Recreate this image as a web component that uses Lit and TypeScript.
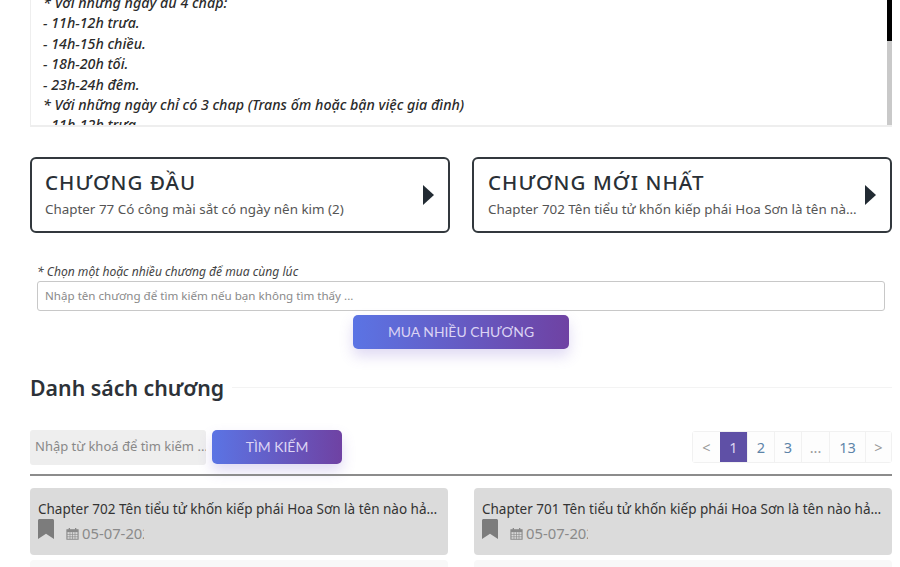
import { LitElement, html, css } from "lit";
import { customElement } from "lit/decorators.js";

const bookmark = html`<svg class="bm" viewBox="0 0 16 20" width="16" height="20"><path d="M0 1.5C0 .7.7 0 1.5 0h13c.8 0 1.5.7 1.5 1.5V20l-8-5.2L0 20z" fill="#7c7c7c"/></svg>`;
const calendar = html`<svg class="cal" viewBox="0 0 14 14" width="13" height="13"><path d="M1 3h12v10.2H1z" fill="none" stroke="#8a8a8a" stroke-width="1.2"/><path d="M1 3h12v2.6H1z" fill="#8a8a8a"/><path d="M3.6 1v2.6M10.4 1v2.6" stroke="#8a8a8a" stroke-width="1.4"/><path d="M4.3 5.5v7.5M7 5.5v7.5M9.7 5.5v7.5M1 8h12M1 10.5h12" stroke="#8a8a8a" stroke-width=".7"/></svg>`;
const arrow = html`<svg class="arrow" viewBox="0 0 11 20" width="11" height="20"><path d="M0 0l11 10L0 20z" fill="#222b33"/></svg>`;

@customElement("app-root")
export class AppRoot extends LitElement {
  static styles = css`
    :host { display: block; height: 567px; overflow: hidden; background: #fff; font-family: "Noto Sans", "Open Sans", sans-serif; color: #333; }
    .page { display: flex; flex-direction: column; padding: 0 8px 0 30px; }
    .notice { display: flex; height: 127px; border-left: 1px solid #eee; border-bottom: 2px solid #eee; overflow: hidden; box-sizing: border-box; }
    .notice-text { flex: 1; padding-left: 12px; margin-top: -7px; font-style: italic; font-weight: 500; font-size: 14.25px; line-height: 20.4px; color: #2b2b2b; }
    .track { width: 5px; background: #c9c9c9; align-self: stretch; }
    .thumb { height: 41px; background: #000; }
    .cards { display: grid; grid-template-columns: 420px 420px; gap: 22px; margin-top: 30px; }
    .card { box-sizing: border-box; height: 76px; border: 2px solid #32383d; border-radius: 6px; padding: 10px 14px 0 14px; display: flex; align-items: center; gap: 5px; }
    .card:first-child { padding-left: 13px; }
    .card-body { flex: 1; min-width: 0; align-self: flex-start; }
    .card-title { font-size: 20.5px; line-height: 26px; letter-spacing: 1.1px; font-weight: 500; color: #2a3036; white-space: nowrap; }
    .card-sub { margin-top: 5px; font-size: 13.4px; line-height: 18px; color: #555; white-space: nowrap; overflow: hidden; text-overflow: ellipsis; }
    .arrow { flex: none; margin-top: -10px; }
    .bulk { margin: 30px 7px 0 7px; display: flex; flex-direction: column; }
    .hint { font-size: 12.1px; line-height: 17px; font-style: italic; color: #444; }
    .bulk-input { box-sizing: border-box; height: 30px; margin-top: 1px; border: 1px solid #c8c8c8; border-radius: 3px; padding: 0 7px; font-size: 11.6px; line-height: 27px; color: #8a8a8a; }
    .btn { box-sizing: border-box; padding-bottom: 2px; display: flex; align-items: center; justify-content: center; color: #dcd4f4; border-radius: 5px; background: linear-gradient(90deg, #5b74e4, #6f42a3); box-shadow: 0 7px 14px rgba(110, 80, 200, .22); font-family: "Lato", sans-serif; }
    .btn-bulk { align-self: center; width: 216px; height: 34px; margin-top: 4px; font-size: 13.9px; }
    .heading { display: flex; align-items: center; gap: 8px; margin-top: 22px; height: 32px; }
    .heading h2 { margin: 0; font-size: 21.3px; font-weight: 600; color: #2d3238; white-space: nowrap; }
    .heading i { flex: 1; height: 1px; background: #f3f3f3; }
    .tools { display: flex; align-items: flex-start; margin-top: 27px; height: 35px; }
    .search { box-sizing: border-box; width: 176px; height: 35px; background: #eee; border-radius: 3px; padding: 0 5px; font-size: 13px; line-height: 33px; color: #888; white-space: nowrap; overflow: hidden; }
    .btn-search { width: 130px; height: 34px; margin-left: 6px; font-size: 13.9px; }
    .pager { display: flex; margin-left: auto; margin-top: 1px; height: 32px; border: 1px solid #f1f1f1; border-radius: 3px; box-sizing: border-box; }
    .pager span { display: flex; align-items: center; justify-content: center; height: 100%; font-size: 14.5px; color: #5d84a8; border-left: 1px solid #f1f1f1; box-sizing: border-box; background: #fdfdfd; }
    .pager span:first-child { border-left: 0; }
    .pager .muted { color: #999; }
    .pager .on { background: #5f50a6; color: #ddd8f0; border-left: 0; }
    .rule { height: 2px; background: #8c8c8c; margin-top: 9px; }
    .rows { display: grid; grid-template-columns: 418px 418px; gap: 5px 26px; margin-top: 12px; }
    .row { box-sizing: border-box; height: 67px; background: #dbdbdb; border-radius: 4px; padding: 11px 8px 0 8px; min-width: 0; }
    .row.blank { background: #f8f8f8; }
    .row-title { font-size: 13.5px; line-height: 20px; color: #333; white-space: nowrap; overflow: hidden; text-overflow: ellipsis; }
    .row-meta { display: flex; align-items: center; height: 24px; margin-top: 2px; }
    .bm { flex: none; margin-top: -8px; }
    .cal { flex: none; margin-left: 12px; }
    .date { width: 62px; margin-left: 3px; font-size: 14.8px; color: #8a8a8a; overflow: hidden; white-space: nowrap; }
  `;

  render() {
    const lines = ["* Với những ngày đủ 4 chap:", "- 11h-12h trưa.", "- 14h-15h chiều.", "- 18h-20h tối.", "- 23h-24h đêm.", "* Với những ngày chỉ có 3 chap (Trans ốm hoặc bận việc gia đình)", "- 11h-12h trưa."];
    const pages: [string, number, string][] = [["<", 27, "muted"], ["1", 27, "on"], ["2", 27, ""], ["3", 27, ""], ["...", 28, "muted"], ["13", 36, ""], [">", 26, "muted"]];
    const rows = ["Chapter 702 Tên tiểu tử khốn kiếp phái Hoa Sơn là tên nào hả vậy trời đất ơi", "Chapter 701 Tên tiểu tử khốn kiếp phái Hoa Sơn là tên nào hả vậy trời đất ơi"];
    return html`<div class="page">
      <div class="notice">
        <div class="notice-text">${lines.map((l) => html`<div>${l}</div>`)}</div>
        <div class="track"><div class="thumb"></div></div>
      </div>
      <div class="cards">
        <div class="card"><div class="card-body"><div class="card-title">CHƯƠNG ĐẦU</div><div class="card-sub">Chapter 77 Có công mài sắt có ngày nên kim (2)</div></div>${arrow}</div>
        <div class="card"><div class="card-body"><div class="card-title">CHƯƠNG MỚI NHẤT</div><div class="card-sub">Chapter 702 Tên tiểu tử khốn kiếp phái Hoa Sơn là tên nào hả vậy trời đất</div></div>${arrow}</div>
      </div>
      <div class="bulk">
        <div class="hint">* Chọn một hoặc nhiều chương để mua cùng lúc</div>
        <div class="bulk-input">Nhập tên chương để tìm kiếm nếu bạn không tìm thấy ...</div>
        <div class="btn btn-bulk">MUA NHIỀU CHƯƠNG</div>
      </div>
      <div class="heading"><h2>Danh sách chương</h2><i></i></div>
      <div class="tools">
        <div class="search">Nhập từ khoá để tìm kiếm ...</div>
        <div class="btn btn-search">TÌM KIẾM</div>
        <div class="pager">${pages.map(([t, w, c]) => html`<span class=${c} style="width:${w}px">${t}</span>`)}</div>
      </div>
      <div class="rule"></div>
      <div class="rows">
        ${rows.map((r) => html`<div class="row"><div class="row-title">${r}</div><div class="row-meta">${bookmark}${calendar}<div class="date">05-07-2023</div></div></div>`)}
        <div class="row blank"></div><div class="row blank"></div>
      </div>
    </div>`;
  }
}
